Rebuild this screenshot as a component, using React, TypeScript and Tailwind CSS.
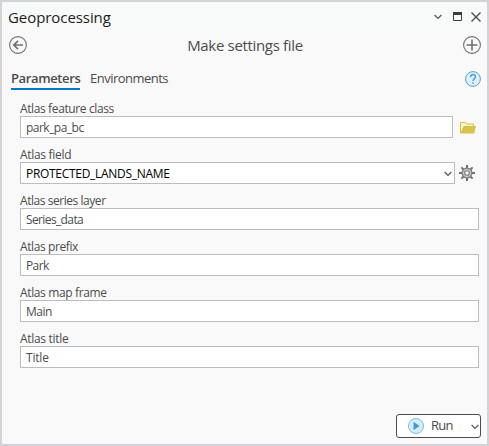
import React from "react";

type Field = {
  label: string;
  labelClass: string;
  value: string;
  valueClass: string;
  kind?: "folder" | "select";
};

const fields: Field[] = [
  { label: "Atlas feature class", labelClass: "tracking-[-0.38px]", value: "park_pa_bc", valueClass: "tracking-[-0.52px]", kind: "folder" },
  { label: "Atlas field", labelClass: "tracking-[-0.3px]", value: "PROTECTED_LANDS_NAME", valueClass: "tracking-[-0.3px] text-black", kind: "select" },
  { label: "Atlas series layer", labelClass: "tracking-[-0.45px]", value: "Series_data", valueClass: "tracking-[-0.62px]" },
  { label: "Atlas prefix", labelClass: "tracking-[-0.4px]", value: "Park", valueClass: "tracking-[-0.6px]" },
  { label: "Atlas map frame", labelClass: "tracking-[-0.36px]", value: "Main", valueClass: "tracking-[-0.5px]" },
  { label: "Atlas title", labelClass: "tracking-[-0.3px]", value: "Title", valueClass: "tracking-[-0.2px]" },
];

function Chevron() {
  return (
    <svg width="8" height="6" viewBox="0 0 8 6" fill="none" stroke="#585858" strokeWidth="1.3">
      <path d="M.6 1 4 4.4 7.4 1" />
    </svg>
  );
}

function FolderIcon() {
  return (
    <svg width="16" height="13" viewBox="0 0 16 13">
      <path d="M.5 12V1.5h5l1 1.500h7v3" fill="#fbf4cf" stroke="#d9bf45" />
      <path d="M0 12.500 3.800 5H16l-1.700 7.500Z" fill="#d8c24e" />
    </svg>
  );
}

function GearIcon() {
  return (
    <svg width="16" height="16" viewBox="0 0 16 16" fill="none">
      <g stroke="#6e6e6e" strokeWidth="2">
        <path d="M8 0v3M8 13v3M0 8h3M13 8h3M2.400 2.400l2 2M11.600 11.600l2 2M2.400 13.600l2-2M11.600 4.400l2-2" />
      </g>
      <circle cx="8" cy="8" r="4.900" fill="#c6c6c6" stroke="#7c7c7c" strokeWidth="1.200" />
      <circle cx="8" cy="8" r="2.300" fill="#fafafa" stroke="#7c7c7c" strokeWidth="1.100" />
    </svg>
  );
}

function FieldRow({ field }: { field: Field }) {
  const width = field.kind === "folder" ? "w-[433px]" : field.kind === "select" ? "w-[435px]" : "w-[459px]";
  return (
    <div className="h-[46px]">
      <div className={`h-[15px] whitespace-nowrap text-[12px] leading-[15px] ${field.labelClass}`}>{field.label}</div>
      <div className="flex items-center">
        <div className={`flex h-[22px] items-center justify-between border border-[#bdbdc0] bg-white pl-[5px] pr-[2px] ${width}`}>
          <span className={`whitespace-nowrap pt-[2px] text-[12px] leading-[20px] ${field.valueClass}`}>{field.value}</span>
          {field.kind === "select" && <div className="pt-[2px]"><Chevron /></div>}
        </div>
        {field.kind === "folder" && <div className="ml-[7px]"><FolderIcon /></div>}
        {field.kind === "select" && <div className="ml-[4px]"><GearIcon /></div>}
      </div>
    </div>
  );
}

export default function App() {
  return (
    <div className="h-[446px] w-[489px] bg-[#d2d2d7] p-[2px] font-['Open_Sans','Noto_Sans',sans-serif] text-[#4c4c4c]">
      <div className="flex h-[442px] w-[485px] flex-col rounded-t-[2px] bg-[#f9f9f9]">
        <header className="flex h-[26px] shrink-0 items-center justify-between rounded-t-[2px] bg-[#f8faf9] pl-[6px] pr-[6px]">
          <h1 className="pt-[4px] text-[15px] leading-[20px] tracking-[-0.07px] text-[#1c1c1c]">Geoprocessing</h1>
          <div className="flex items-center pt-[3px]">
            <Chevron />
            <svg className="ml-[11px]" width="9" height="9" viewBox="0 0 9 9">
              <path d="M.5.5h8v8h-8Z" fill="none" stroke="#3c3c3c" />
              <path d="M0 0h9v3H0Z" fill="#3c3c3c" />
            </svg>
            <svg className="ml-[9px]" width="10" height="10" viewBox="0 0 10 10" stroke="#4c4c4c" strokeWidth="1.4">
              <path d="m.5.5 9 9m0-9-9 9" />
            </svg>
          </div>
        </header>
        <div className="flex h-[36px] shrink-0 items-center justify-between pb-[2px] pl-[7px] pr-[6px]">
          <svg width="18" height="18" viewBox="0 0 18 18" fill="none" stroke="#707070">
            <circle cx="9" cy="9" r="8.4" strokeWidth="1.1" />
            <path d="M14 9H5M9 4.8 4.8 9 9 13.2" strokeWidth="1.7" />
          </svg>
          <h2 className="text-[15px] leading-[20px] tracking-[-0.33px]">Make settings file</h2>
          <svg width="18" height="18" viewBox="0 0 18 18" fill="none" stroke="#707070">
            <circle cx="9" cy="9" r="8.4" strokeWidth="1.1" />
            <path d="M9 3.5v11M3.5 9h11" strokeWidth="1.6" />
          </svg>
        </div>
        <nav className="flex h-[37px] shrink-0 pl-[9px] pr-[6px] pt-[5px]">
          <div className="h-[21px] w-[69px] whitespace-nowrap border-b-2 border-[#007ac2] text-[13px] font-semibold leading-[18px] tracking-[-0.38px]">Parameters</div>
          <div className="ml-[10px] whitespace-nowrap text-[13px] leading-[18px] tracking-[-0.52px]">Environments</div>
          <svg className="ml-auto mt-[2px]" width="16" height="16" viewBox="0 0 16 16" fill="none" stroke="#4ba4dc">
            <circle cx="8" cy="8" r="7.4" fill="#e1f1fa" />
            <path d="M5.6 6.2C5.6 4.6 6.6 3.6 8 3.6s2.5.9 2.5 2.2C10.500 7.600 8 7.700 8 10M8 11.300v1.400" strokeWidth="1.5" />
          </svg>
        </nav>
        <main className="pl-[18px]">
          {fields.map((field) => <FieldRow key={field.label} field={field} />)}
        </main>
        <button className="mb-[6px] ml-auto mr-[6px] mt-auto flex h-[24px] w-[85px] items-center rounded-[3px] border border-[#4c4c4c] bg-white pl-[11px] pr-px">
          <svg width="16" height="16" viewBox="0 0 16 16">
            <circle cx="8" cy="8" r="7.5" fill="#d9edf8" stroke="#79bde5" />
            <path d="m5.500 3.800 6 4.200-6 4.200Z" fill="#3c9cd8" />
          </svg>
          <span className="ml-[7px] pb-[2px] text-[13px] leading-[20px] tracking-[-0.8px]">Run</span>
          <span className="ml-auto flex pt-[2px]"><Chevron /></span>
        </button>
      </div>
    </div>
  );
}
